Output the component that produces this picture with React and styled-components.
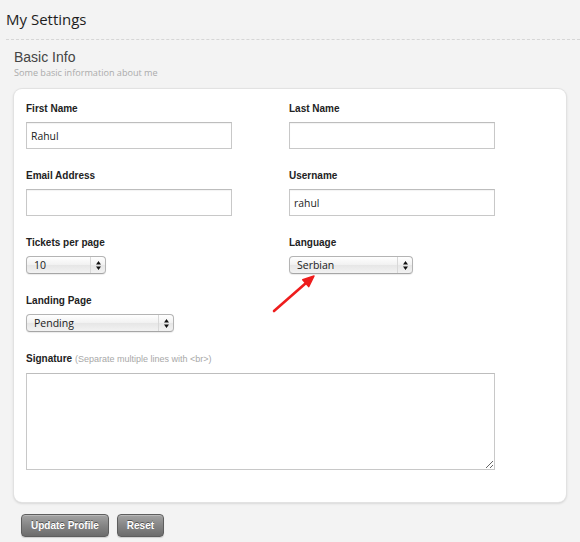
import React from "react"
import styled, { createGlobalStyle } from "styled-components"

const GlobalStyle = createGlobalStyle`
  html, body {
    margin: 0;
    padding: 0;
    background: #f3f3f3;
    font-family: "Liberation Sans", Arial, sans-serif;
  }
`

const Page = styled.div`
  width: 580px;
  min-height: 542px;
  background: #f3f3f3;
`
const PageHeader = styled.header`
  margin-left: 6px;
  padding: 9px 0 10px;
  border-bottom: 1px dashed #d6d6d6;
`
const PageTitle = styled.h1`
  margin: 0;
  font-family: "Open Sans", sans-serif;
  font-weight: 400;
  font-size: 15px;
  line-height: 20px;
  color: #1e1e1e;
`
const Section = styled.section`
  padding: 0 14px;
`
const SectionTitle = styled.h2`
  margin: 9px 0 0;
  font-weight: 400;
  font-size: 14px;
  line-height: 17px;
  color: #444;
`
const SectionHint = styled.p`
  margin: 1px 0 0;
  font-family: "Open Sans", sans-serif;
  font-size: 9.1px;
  line-height: 12px;
  color: #ababab;
`
const Card = styled.div`
  position: relative;
  margin-top: 10px;
  padding: 13px 12px 32px;
  background: #fff;
  border-radius: 8px;
  box-shadow: 0 0 0 1px #e2e2e2, 0 1px 3px rgba(0, 0, 0, 0.22);
`
const FormGrid = styled.div`
  display: grid;
  grid-template-columns: 263px 206px;
  row-gap: 20px;
`
const Field = styled.div`
  display: flex;
  flex-direction: column;
  align-items: flex-start;
  gap: 7px;
  grid-column: ${(p) => (p.$wide ? "1 / -1" : "auto")};
`
const Label = styled.label`
  font-size: 10px;
  line-height: 13px;
  font-weight: 700;
  color: #222;
`
const LabelHint = styled.span`
  font-size: 9px;
  font-weight: 400;
  color: #a8a8a8;
`
const TextInput = styled.input`
  box-sizing: border-box;
  width: 206px;
  height: 27px;
  margin: 0;
  padding: 0 4px;
  border: 1px solid #c8c8c8;
  border-top-color: #bdbdbd;
  border-radius: 0;
  box-shadow: inset 0 1px 1px rgba(0, 0, 0, 0.05);
  font-family: "Open Sans", sans-serif;
  font-size: 10.4px;
  color: #222;
  outline: none;
`
const TextArea = styled.textarea`
  box-sizing: border-box;
  width: 469px;
  height: 97px;
  margin: 0;
  padding: 4px;
  border: 1px solid #c8c8c8;
  border-top-color: #bdbdbd;
  font-family: "Open Sans", sans-serif;
  font-size: 10px;
  outline: none;
`
const SelectBox = styled.div`
  box-sizing: border-box;
  display: flex;
  align-items: stretch;
  width: ${(p) => p.$width}px;
  height: 18px;
  border: 1px solid #b4b4b4;
  border-bottom-color: #a6a6a6;
  border-radius: 4px;
  background: linear-gradient(#ffffff, #f1f1f1 50%, #e6e6e6 51%, #f2f2f2);
  box-shadow: 0 1px 1px rgba(0, 0, 0, 0.08);
  overflow: hidden;
`
const SelectField = styled.select`
  flex: 1;
  min-width: 0;
  margin: 0;
  padding: 0 0 0 7px;
  border: 0;
  background: transparent;
  appearance: none;
  font-family: "Open Sans", sans-serif;
  font-size: 10.5px;
  line-height: 16px;
  color: #1a1a1a;
  outline: none;
`
const ArrowCell = styled.span`
  display: flex;
  align-items: center;
  justify-content: center;
  width: 14px;
  border-left: 1px solid #d8d8d8;
  svg {
    display: block;
  }
`
const Actions = styled.div`
  display: flex;
  gap: 8px;
  margin-top: 12px;
  padding-left: 7px;
`
const Button = styled.button`
  height: 23px;
  padding: 0 9px;
  border: 1px solid #5e5e5e;
  border-radius: 4px;
  background: linear-gradient(#a3a3a3, #858585 50%, #6c6c6c);
  box-shadow: inset 0 1px 0 rgba(255, 255, 255, 0.25), 0 1px 1px rgba(0, 0, 0, 0.15);
  color: #fff;
  font-family: "Liberation Sans", Arial, sans-serif;
  font-size: 10px;
  font-weight: 700;
  text-shadow: 0 -1px 0 rgba(0, 0, 0, 0.45);
  cursor: pointer;
`
const Annotation = styled.svg`
  position: absolute;
  left: 255px;
  top: 182px;
  pointer-events: none;
`

const Arrows = () => (
  <svg width="5" height="9" viewBox="0 0 5 9">
    <path d="M2.5 0 L5 3.5 H0 Z M2.5 9 L0 5.5 H5 Z" fill="#111" />
  </svg>
)

const Select = ({ width, value, options }) => (
  <SelectBox $width={width}>
    <SelectField defaultValue={value}>
      {options.map((o) => (
        <option key={o}>{o}</option>
      ))}
    </SelectField>
    <ArrowCell>
      <Arrows />
    </ArrowCell>
  </SelectBox>
)

const App = () => {
  return (
    <Page>
      <GlobalStyle />
      <PageHeader>
        <PageTitle>My Settings</PageTitle>
      </PageHeader>
      <Section>
        <SectionTitle>Basic Info</SectionTitle>
        <SectionHint>Some basic information about me</SectionHint>
        <Card>
          <FormGrid>
            <Field>
              <Label>First Name</Label>
              <TextInput defaultValue="Rahul" />
            </Field>
            <Field>
              <Label>Last Name</Label>
              <TextInput />
            </Field>
            <Field>
              <Label>Email Address</Label>
              <TextInput />
            </Field>
            <Field>
              <Label>Username</Label>
              <TextInput defaultValue="rahul" />
            </Field>
            <Field>
              <Label>Tickets per page</Label>
              <Select width={80} value="10" options={["10", "20", "50"]} />
            </Field>
            <Field>
              <Label>Language</Label>
              <Select width={124} value="Serbian" options={["English", "Serbian"]} />
            </Field>
            <Field>
              <Label>Landing Page</Label>
              <Select width={148} value="Pending" options={["Pending", "Open", "Closed"]} />
            </Field>
            <Field $wide>
              <Label>
                Signature <LabelHint>(Separate multiple lines with &lt;br&gt;)</LabelHint>
              </Label>
              <TextArea />
            </Field>
          </FormGrid>
          <Annotation width="50" height="46" viewBox="0 0 50 46">
            <line x1="5" y1="40" x2="37" y2="12" stroke="#ee1d1d" strokeWidth="2.6" strokeLinecap="round" />
            <path d="M45 5 L39.7 15.6 L33.7 8.8 Z" fill="#ee1d1d" stroke="#ee1d1d" strokeWidth="1.5" strokeLinejoin="round" />
          </Annotation>
        </Card>
        <Actions>
          <Button>Update Profile</Button>
          <Button>Reset</Button>
        </Actions>
      </Section>
    </Page>
  )
}

export default App
